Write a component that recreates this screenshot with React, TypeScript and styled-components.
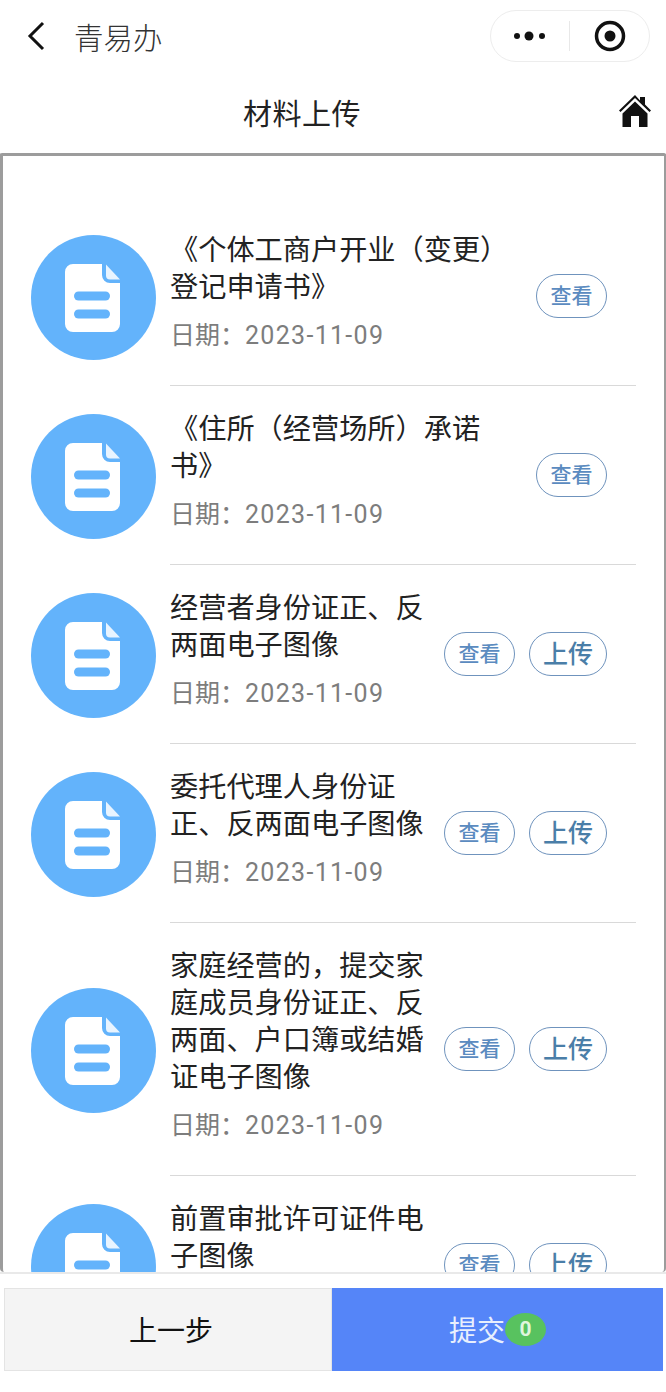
import React from "react";
import styled, { createGlobalStyle } from "styled-components";

const Global = createGlobalStyle`
  html, body { margin: 0; padding: 0; background: #fff; }
  * { box-sizing: border-box; }
  body { font-family: Roboto, "Noto Sans CJK SC", sans-serif; }
`;
const Page = styled.div`
  width: 666px; height: 1392px; display: flex; flex-direction: column; overflow: hidden; background: #fff;
`;
const NavBar = styled.div`
  height: 75px; flex: none; display: flex; align-items: center; padding: 0 16px 3px 26px;
`;
const BackIcon = styled.svg`
  width: 20px; height: 32px; flex: none;
`;
const AppName = styled.div`
  margin-left: 28px; font-size: 29.5px; color: #333; flex: 1; font-weight: 300;
`;
const Capsule = styled.div`
  width: 160px; height: 52px; border: 1px solid #ededed; border-radius: 26px; display: flex; align-items: center; background: #fff;
`;
const CapsuleSide = styled.div<{ $right?: boolean }>`
  flex: 1; display: flex; align-items: center; justify-content: center; padding-left: ${(p) => (p.$right ? "2px" : "0")};
`;
const CapsuleDivider = styled.div`
  width: 1px; height: 30px; background: #e8e8e8; flex: none;
`;
const TitleBar = styled.div`
  height: 78px; flex: none; display: flex; align-items: center; justify-content: center; position: relative; padding: 0 62px 4px 0;
`;
const PageTitle = styled.div`
  font-size: 29px; color: #222; letter-spacing: 0.5px;
`;
const HomeIcon = styled.svg`
  position: absolute; right: 15px; top: 20px; width: 32px; height: 33px;
`;
const Panel = styled.div`
  flex: 1; min-height: 0; overflow: hidden; border: 3px solid #9c9c9c; border-right-width: 2px; border-bottom: none;
  border-radius: 2px 2px 4px 4px; padding: 51px 28px 0 28px;
`;
const Row = styled.div`
  display: flex; align-items: center;
`;
const DocCircle = styled.svg`
  width: 125px; height: 125px; flex: none; margin-top: 1px;
`;
const Body = styled.div`
  flex: 1; margin-left: 14px; padding: 25px 0 31px; border-bottom: 1px solid #d9d9d9; display: flex; align-items: center; justify-content: space-between;
`;
const TextCol = styled.div<{ $wide?: boolean }>`
  width: ${(p) => (p.$wide ? "350px" : "264px")}; flex: none;
`;
const Name = styled.div`
  font-size: 28.2px; line-height: 37px; color: #222;
`;
const DateLine = styled.div`
  font-size: 25px; line-height: 37px; margin-top: 11px; color: #7d7d7d;
`;
const DateValue = styled.span`
  letter-spacing: 1.3px;
`;
const Actions = styled.div`
  display: flex; gap: 14px; margin-right: 29px; margin-top: 6px; flex: none;
`;
const Pill = styled.div<{ $upload?: boolean }>`
  height: 44px; width: ${(p) => (p.$upload ? "78px" : "71px")}; border: 1.5px solid #6f93bd; border-radius: 22px;
  display: flex; align-items: center; justify-content: center; padding-bottom: ${(p) => (p.$upload ? "5px" : "4px")}; color: ${(p) => (p.$upload ? "#4a7ea8" : "#5b8bc0")};
  font-size: ${(p) => (p.$upload ? "25px" : "21px")}; font-weight: 500; background: #fff;
`;
const Footer = styled.div`
  height: 120px; flex: none; border-top: 2px solid #e9e9e9; padding: 14px 3px 21px 4px; display: flex; background: #fff;
`;
const PrevButton = styled.div`
  width: 328px; background: #f4f4f4; border: 1px solid #e4e4e4; display: flex; align-items: center; justify-content: center;
  font-size: 28px; color: #111; padding: 0 0 2px 6px;
`;
const SubmitButton = styled.div`
  flex: 1; background: #5585f8; display: flex; align-items: center; justify-content: center; font-size: 28px; color: #e8effd; padding-bottom: 1px;
`;
const Badge = styled.span`
  width: 41px; height: 33px; border-radius: 50%; background: #58c25f; color: #dff5dd; font-size: 21px; font-weight: 700;
  display: flex; align-items: center; justify-content: center; flex: none;
`;

const Doc = () => (
  <DocCircle viewBox="0 0 125 125">
    <circle cx="62.5" cy="62.5" r="62.5" fill="#63b3fb" />
    <path d="M42 29h29v11a8 8 0 0 0 8 8h10v41a8 8 0 0 1-8 8H42a8 8 0 0 1-8-8V37a8 8 0 0 1 8-8z" fill="#fff" />
    <path d="M75 29.5l14 15h-10a4 4 0 0 1-4-4z" fill="#fff" opacity="0.85" />
    <rect x="43" y="56.500" width="36" height="9" rx="4.500" fill="#63b3fb" />
    <rect x="43" y="74.500" width="36" height="9" rx="4.500" fill="#63b3fb" />
  </DocCircle>
);

const rows = [
  { name: "《个体工商户开业（变更）登记申请书》", wide: true },
  { name: "《住所（经营场所）承诺书》", wide: true },
  { name: "经营者身份证正、反两面电子图像" },
  { name: "委托代理人身份证正、反两面电子图像" },
  { name: "家庭经营的，提交家庭成员身份证正、反两面、户口簿或结婚证电子图像" },
  { name: "前置审批许可证件电子图像" },
];

export default function App() {
  return (
    <Page>
      <Global />
      <NavBar>
        <BackIcon viewBox="0 0 20 32">
          <path d="M17 3L4 16l13 13" fill="none" stroke="#111" strokeWidth="3" />
        </BackIcon>
        <AppName>青易办</AppName>
        <Capsule>
          <CapsuleSide>
            <svg width="36" height="12" viewBox="0 0 36 12">
              <circle cx="5" cy="6" r="3" fill="#111" />
              <circle cx="17" cy="6" r="4.500" fill="#111" />
              <circle cx="30" cy="6" r="3" fill="#111" />
            </svg>
          </CapsuleSide>
          <CapsuleDivider />
          <CapsuleSide $right>
            <svg width="32" height="32" viewBox="0 0 32 32">
              <circle cx="16" cy="16" r="13.500" fill="none" stroke="#111" strokeWidth="3.500" />
              <circle cx="16" cy="16" r="5.500" fill="#111" />
            </svg>
          </CapsuleSide>
        </Capsule>
      </NavBar>
      <TitleBar>
        <PageTitle>材料上传</PageTitle>
        <HomeIcon viewBox="0 0 32 33">
          <path d="M16 0L0 15.500l1.500 1.500L16 3l14.500 14 1.500-1.500-6-6V2h-5v3.500z" fill="#111" />
          <path d="M16 6.500L3.500 18.500V32H12V21h8v11h8.500V18.500z" fill="#111" />
        </HomeIcon>
      </TitleBar>
      <Panel>
        {rows.map((r) => (
          <Row key={r.name}>
            <Doc />
            <Body>
              <TextCol $wide={r.wide}>
                <Name>{r.name}</Name>
                <DateLine>
                  日期：<DateValue>2023-11-09</DateValue>
                </DateLine>
              </TextCol>
              <Actions>
                <Pill>查看</Pill>
                {!r.wide && <Pill $upload>上传</Pill>}
              </Actions>
            </Body>
          </Row>
        ))}
      </Panel>
      <Footer>
        <PrevButton>上一步</PrevButton>
        <SubmitButton>
          提交
          <Badge>0</Badge>
        </SubmitButton>
      </Footer>
    </Page>
  );
}
